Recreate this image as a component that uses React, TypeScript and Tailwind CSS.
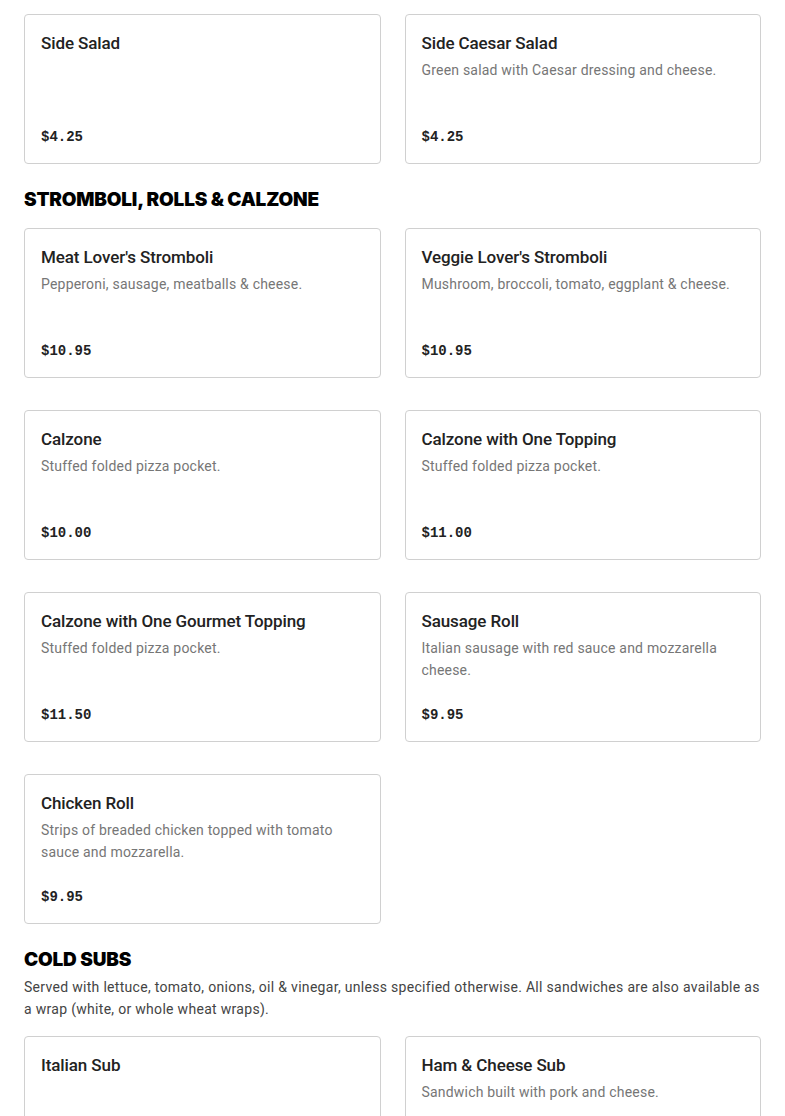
type Item = { name: string; desc?: string; price: string };

const salads: Item[] = [
  { name: 'Side Salad', price: '$4.25' },
  { name: 'Side Caesar Salad', desc: 'Green salad with Caesar dressing and cheese.', price: '$4.25' },
];

const stromboli: Item[] = [
  { name: "Meat Lover's Stromboli", desc: 'Pepperoni, sausage, meatballs & cheese.', price: '$10.95' },
  { name: "Veggie Lover's Stromboli", desc: 'Mushroom, broccoli, tomato, eggplant & cheese.', price: '$10.95' },
  { name: 'Calzone', desc: 'Stuffed folded pizza pocket.', price: '$10.00' },
  { name: 'Calzone with One Topping', desc: 'Stuffed folded pizza pocket.', price: '$11.00' },
  { name: 'Calzone with One Gourmet Topping', desc: 'Stuffed folded pizza pocket.', price: '$11.50' },
  { name: 'Sausage Roll', desc: 'Italian sausage with red sauce and mozzarella cheese.', price: '$9.95' },
  { name: 'Chicken Roll', desc: 'Strips of breaded chicken topped with tomato sauce and mozzarella.', price: '$9.95' },
];

const coldSubs: Item[] = [
  { name: 'Italian Sub', price: '$8.95' },
  { name: 'Ham & Cheese Sub', desc: 'Sandwich built with pork and cheese.', price: '$8.95' },
];

function Card({ item }: { item: Item }) {
  return (
    <div className="flex flex-col min-h-[150px] border border-[#d0d0d0] rounded-[4px] bg-white px-4 pt-4 pb-4">
      <h3 className="text-[17px] leading-6 font-medium text-[#222] tracking-[-0.1px]">{item.name}</h3>
      {item.desc && (
        <p className="mt-1 text-[14px] leading-[22px] text-[#767676] tracking-[0.2px]">{item.desc}</p>
      )}
      <p className="mt-auto pt-4 font-['Liberation_Mono',monospace] font-bold text-[14px] leading-5 text-[#222]">
        {item.price}
      </p>
    </div>
  );
}

function Grid({ items }: { items: Item[] }) {
  return (
    <div className="grid grid-cols-2 gap-x-6 gap-y-8">
      {items.map((it) => (
        <Card key={it.name} item={it} />
      ))}
    </div>
  );
}

function Heading({ children }: { children: string }) {
  return (
    <h2 className="font-['Inter',sans-serif] text-[19px] leading-6 font-black uppercase text-black tracking-[-0.2px]">
      {children}
    </h2>
  );
}

export default function App() {
  return (
    <div className="h-[1116px] overflow-hidden bg-white font-['Roboto',sans-serif] px-6 pt-[14px]">
      <Grid items={salads} />

      <section className="mt-6">
        <Heading>Stromboli, Rolls & Calzone</Heading>
        <div className="mt-4">
          <Grid items={stromboli} />
        </div>
      </section>

      <section className="mt-6">
        <Heading>Cold Subs</Heading>
        <p className="mt-1 text-[14px] leading-[22px] text-[#444] tracking-[0.3px]">
          Served with lettuce, tomato, onions, oil &amp; vinegar, unless specified otherwise. All sandwiches are also
          available as a wrap (white, or whole wheat wraps).
        </p>
        <div className="mt-4">
          <Grid items={coldSubs} />
        </div>
      </section>
    </div>
  );
}
